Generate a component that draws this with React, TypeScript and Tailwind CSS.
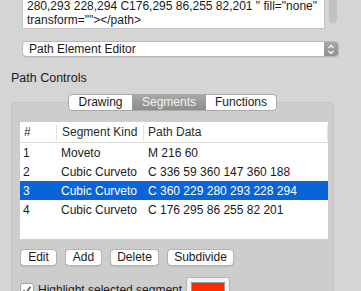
import React from 'react';

const rows = [
  { n: '1', kind: 'Moveto', data: 'M 216 60' },
  { n: '2', kind: 'Cubic Curveto', data: 'C 336 59 360 147 360 188' },
  { n: '3', kind: 'Cubic Curveto', data: 'C 360 229 280 293 228 294' },
  { n: '4', kind: 'Cubic Curveto', data: 'C 176 295 86 255 82 201' },
];

const font = { fontFamily: '"Liberation Sans", Arial, sans-serif' };

function PushButton({ label, w }: { label: string; w: string }) {
  return (
    <button
      className={`h-[17px] ${w} rounded-[4px] border border-[#b3b3b3] bg-white text-[12px] leading-[15px] text-[#1a1a1a] shadow-[0_0.5px_0.5px_rgba(0,0,0,0.15)]`}
    >
      {label}
    </button>
  );
}

export default function App() {
  return (
    <div className="w-[361px] h-[291px] overflow-hidden bg-[#d5d5d5] text-[12px] text-[#1a1a1a] whitespace-nowrap" style={font}>
      {/* source text view */}
      <div className="flex ml-[22px] h-[29px]">
        <div className="w-[303px] h-[29px] bg-white border-b border-x border-[#c4c4c4] overflow-hidden flex flex-col justify-end pl-[4px] pb-[1px] leading-[14px]">
          <div>d="M216,60 C336,59 360,147 360,188 C360,229</div>
          <div>280,293 228,294 C176,295 86,255 82,201 " fill="none"</div>
          <div>transform=""&gt;&lt;/path&gt;</div>
        </div>
        <div className="w-[14px] flex justify-center pl-[1px]">
          <div className="w-[8px] h-[23px] rounded-b-full bg-[#c1c1c1]" />
        </div>
      </div>

      {/* element popup */}
      <div className="ml-[22px] mt-[12px] w-[317px] h-[16px] flex rounded-[4px] border border-[#b9b9b9] bg-white overflow-hidden shadow-[0_0.5px_0.5px_rgba(0,0,0,0.12)]">
        <div className="flex-1 pl-[6px] leading-[14px]">Path Element Editor</div>
        <div className="w-[14px] bg-gradient-to-b from-[#a9a9a9] to-[#8f8f8f] flex items-center justify-center">
          <svg width="8" height="11" viewBox="0 0 8 11" fill="none" stroke="#f4f4f4" strokeWidth="1.3">
            <path d="M1.5 4 L4 1.5 L6.5 4" />
            <path d="M1.5 7 L4 9.5 L6.5 7" />
          </svg>
        </div>
      </div>

      <div className="ml-[11px] mt-[13px] leading-[16px] text-[12.5px]">Path Controls</div>

      {/* tabs */}
      <div className="relative z-10 mt-[8px] ml-[68px] flex h-[17px] w-[209px] rounded-[4px] border border-[#a9a9a9] bg-white overflow-hidden leading-[15px]">
        <div className="w-[63px] text-center">Drawing</div>
        <div className="w-[74px] text-center text-[#f2f2f2] bg-gradient-to-b from-[#a8a8a8] to-[#8d8d8d]">Segments</div>
        <div className="flex-1 text-center">Functions</div>
      </div>

      {/* group box */}
      <div className="-mt-[9px] ml-[11px] w-[323px] h-[200px] rounded-[4px] border border-[#c6c6c6] bg-[#cdcdcd] pt-[19px] pl-[8px]">
        <div className="w-[308px] h-[117px] bg-white">
          <div className="flex h-[21px] items-center border-b border-[#dcdcdc] text-[#2a2a2a]">
            <div className="w-[37px] pl-[4px] border-r border-[#e2e2e2] h-[15px] leading-[15px]">#</div>
            <div className="w-[87px] pl-[5px] border-r border-[#e2e2e2] h-[15px] leading-[15px]">Segment Kind</div>
            <div className="flex-1 pl-[4px] border-r border-[#e2e2e2] h-[15px] leading-[15px]">Path Data</div>
          </div>
          {rows.map((r) => {
            const sel = r.n === '3';
            return (
              <div
                key={r.n}
                className={`flex h-[19px] items-center ${sel ? 'bg-[#0b63d8] text-white' : ''}`}
              >
                <div className="w-[37px] pl-[3px]">{r.n}</div>
                <div className="w-[87px] pl-[4px]">{r.kind}</div>
                <div className="flex-1 pl-[4px]">{r.data}</div>
              </div>
            );
          })}
        </div>

        <div className="flex gap-[8px] mt-[10px]">
          <PushButton label="Edit" w="w-[37px]" />
          <PushButton label="Add" w="w-[37px]" />
          <PushButton label="Delete" w="w-[49px]" />
          <PushButton label="Subdivide" w="w-[67px]" />
        </div>

        <div className="flex items-start mt-[11px]">
          <div className="mt-[6px] w-[14px] h-[14px] rounded-[3px] border border-[#a5a5a5] bg-white flex items-center justify-center">
            <svg width="10" height="10" viewBox="0 0 10 10" fill="none" stroke="#555" strokeWidth="1.6">
              <path d="M1.5 5.2 L4 7.8 L8.5 1.8" />
            </svg>
          </div>
          <div className="ml-[4px] mt-[5px] w-[148px] leading-[16px]">Highlight selected segment</div>
          <div className="w-[44px] h-[24px] rounded-[2px] border border-[#b5b5b5] bg-[#f2f2f2] pt-[4px] px-[4px]">
            <div className="h-[18px] bg-[#ff2a00] border border-[#9a9a9a]" />
          </div>
        </div>
      </div>
    </div>
  );
}
